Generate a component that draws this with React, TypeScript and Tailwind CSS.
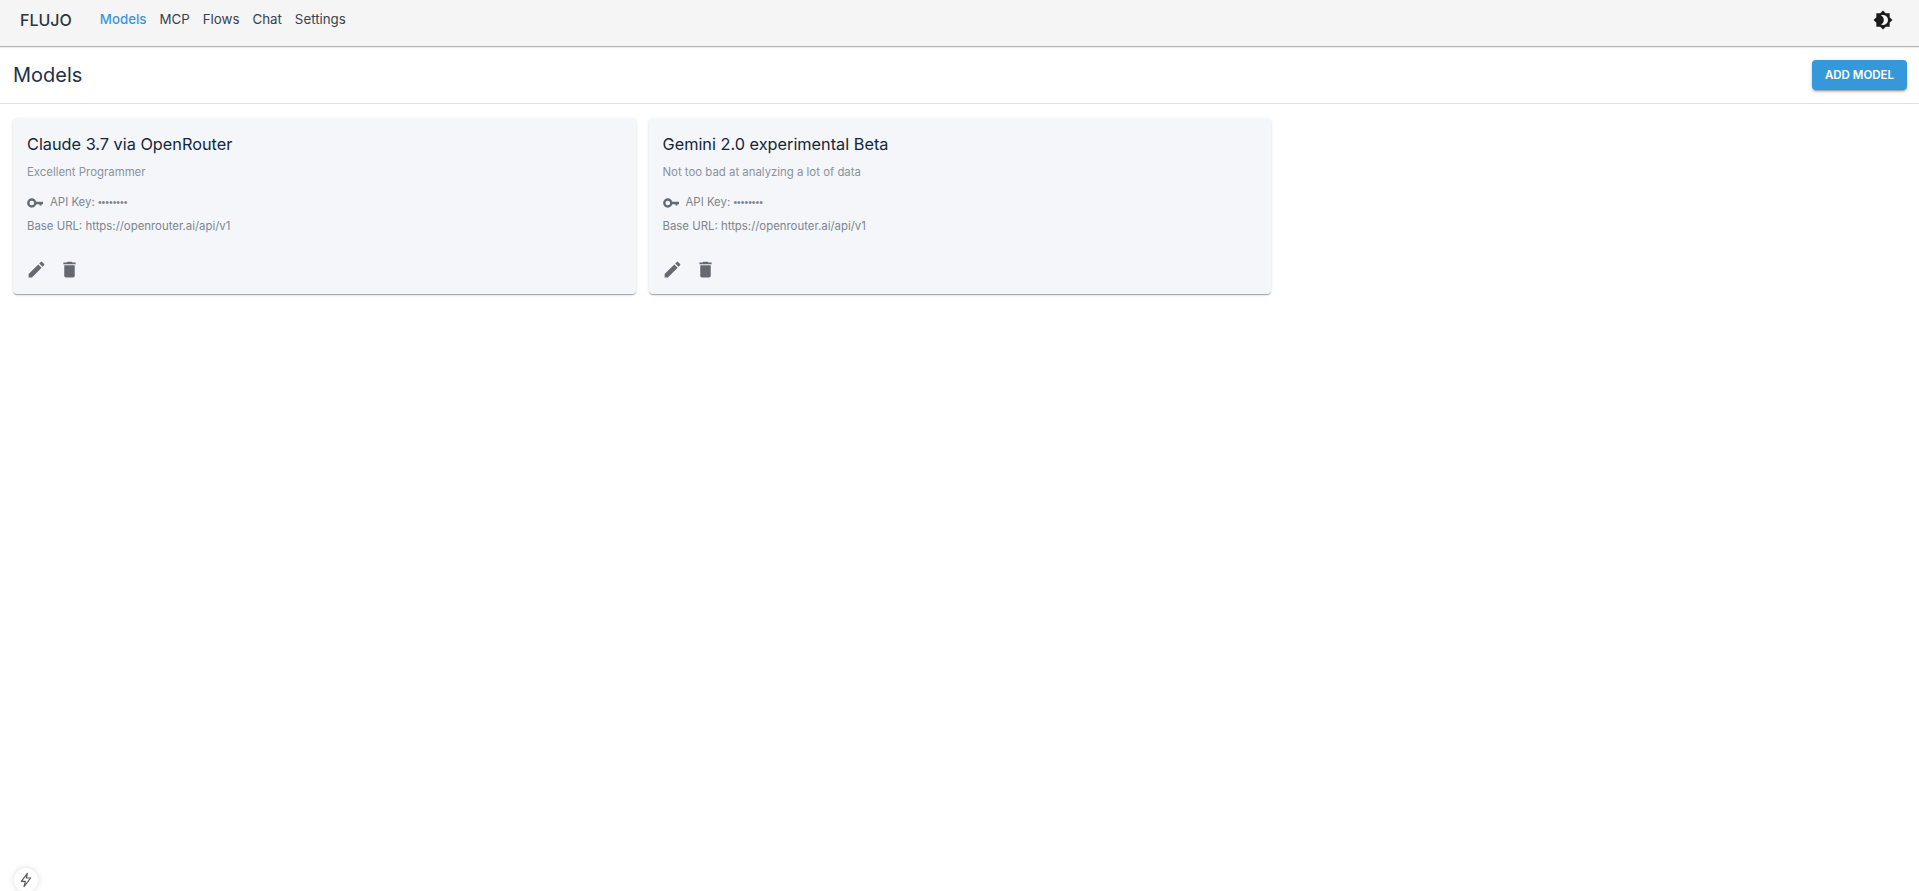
const font = { fontFamily: "Inter, 'Liberation Sans', sans-serif" };

const navLinks = ["Models", "MCP", "Flows", "Chat", "Settings"];

const models = [
  {
    id: "claude",
    name: "Claude 3.7 via OpenRouter",
    description: "Excellent Programmer",
    baseUrl: "https://openrouter.ai/api/v1",
  },
  {
    id: "gemini",
    name: "Gemini 2.0 experimental Beta",
    description: "Not too bad at analyzing a lot of data",
    baseUrl: "https://openrouter.ai/api/v1",
  },
];

function MuiIcon({ d, className }: { d: string; className: string }) {
  return (
    <svg viewBox="0 0 24 24" fill="currentColor" className={className}>
      <path d={d} />
    </svg>
  );
}

const EDIT_ICON =
  "M3 17.25V21h3.75L17.81 9.94l-3.75-3.75L3 17.25zM20.71 7.04c.39-.39.39-1.02 0-1.41l-2.34-2.34a.9959.9959 0 0 0-1.41 0l-1.83 1.83 3.75 3.75 1.83-1.83z";
const DELETE_ICON =
  "M6 19c0 1.1.9 2 2 2h8c1.1 0 2-.9 2-2V7H6v12zM19 4h-3.5l-1-1h-5l-1 1H5v2h14V4z";
const BRIGHTNESS_ICON =
  "M20 8.69V4h-4.69L12 .69 8.69 4H4v4.69L.69 12 4 15.31V20h4.69L12 23.31 15.31 20H20v-4.69L23.31 12 20 8.69zM12 18c-.89 0-1.74-.2-2.5-.55C11.56 16.5 13 14.42 13 12s-1.44-4.5-3.5-5.45C10.26 6.2 11.11 6 12 6c3.31 0 6 2.69 6 6s-2.69 6-6 6z";

function KeyIcon() {
  return (
    <svg viewBox="0 0 16 10" className="mr-[7px] h-[10px] w-[16px] text-[#666b73]" fill="none">
      <circle cx="4.8" cy="5" r="3.5" stroke="currentColor" strokeWidth="2.4" />
      <path d="M8.5 3.7h7.5v2.6h-1.5v1.1h-2V6.3H8.5z" fill="currentColor" />
    </svg>
  );
}

function ModelCard({ model }: { model: (typeof models)[number] }) {
  return (
    <div className="flex h-[176px] flex-col rounded bg-[#f4f6fa] px-[14px] pt-[14px] shadow-[0_2px_1px_-1px_rgba(0,0,0,0.2),0_1px_1px_0_rgba(0,0,0,0.14),0_1px_3px_0_rgba(0,0,0,0.12)]">
      <div className="text-[16.3px] leading-[24px] font-normal text-[#14263a]">
        {model.name}
      </div>
      <div className="mt-[7px] text-[11.4px] leading-[18px] text-[#8a929c]">
        {model.description}
      </div>
      <div className="mt-[13px] flex h-[18px] items-center text-[11.4px] text-[#7d858f]">
        <KeyIcon />
        <span>
          API Key:{" "}
          <span style={{ fontFamily: "'Liberation Sans', sans-serif" }} className="text-[10.5px]">
            ••••••••
          </span>
        </span>
      </div>
      <div className="mt-[5px] text-[11.4px] leading-[18px] text-[#7d858f]">
        Base URL: {model.baseUrl}
      </div>
      <div className="mt-[24px] ml-[-1px] flex items-center gap-[12px] text-[#666a70]">
        <MuiIcon d={EDIT_ICON} className="h-[21px] w-[21px]" />
        <MuiIcon d={DELETE_ICON} className="h-[21px] w-[21px]" />
      </div>
    </div>
  );
}

export default function App() {
  return (
    <div style={font} className="relative h-[891px] overflow-hidden bg-white">
      <header className="flex h-[47px] items-center border-b border-[#b4b4b4] bg-[#f5f5f5] pr-[26px] pb-[6px] pl-[20px] shadow-[0_1px_1px_rgba(0,0,0,0.08)]">
        <div className="text-[16px] font-medium text-[#2a3642]">FLUJO</div>
        <nav className="ml-[28px] flex items-center gap-[13px] text-[13.3px]">
          {navLinks.map((link) => (
            <a
              key={link}
              className={link === "Models" ? "font-medium text-[#3d96dc]" : "text-[#36424e]"}
            >
              {link}
            </a>
          ))}
        </nav>
        <MuiIcon d={BRIGHTNESS_ICON} className="ml-auto h-[20px] w-[20px] text-[#1b1b1b]" />
      </header>

      <div className="flex h-[57px] items-center justify-between border-b border-[#e0e0e0] pr-[12px] pl-[13px]">
        <h1 className="text-[20px] font-normal text-[#1f3147]">Models</h1>
        <button
          type="button"
          className="flex h-[30px] w-[95px] items-center justify-center rounded bg-[#3498db] pt-[1px] text-[11.5px] font-semibold text-white shadow-[0_3px_1px_-2px_rgba(0,0,0,0.2),0_2px_2px_0_rgba(0,0,0,0.14),0_1px_5px_0_rgba(0,0,0,0.12)]"
        >
          ADD MODEL
        </button>
      </div>

      <div className="grid grid-cols-[622.5px_622.5px] gap-[13px] px-[13px] pt-[14px]">
        {models.map((model) => (
          <ModelCard key={model.id} model={model} />
        ))}
      </div>

      <div className="absolute bottom-[-1px] left-[14px] flex h-[24px] w-[24px] items-center justify-center rounded-full bg-white shadow-[0_0_6px_rgba(0,0,0,0.15)]">
        <svg
          viewBox="0 0 24 24"
          fill="none"
          stroke="#5c5c5c"
          strokeWidth="1.8"
          strokeLinejoin="round"
          className="h-[16px] w-[16px]"
        >
          <path d="M14 2 5 14h6l-2 8 10-13h-6.5z" />
        </svg>
      </div>
    </div>
  );
}
